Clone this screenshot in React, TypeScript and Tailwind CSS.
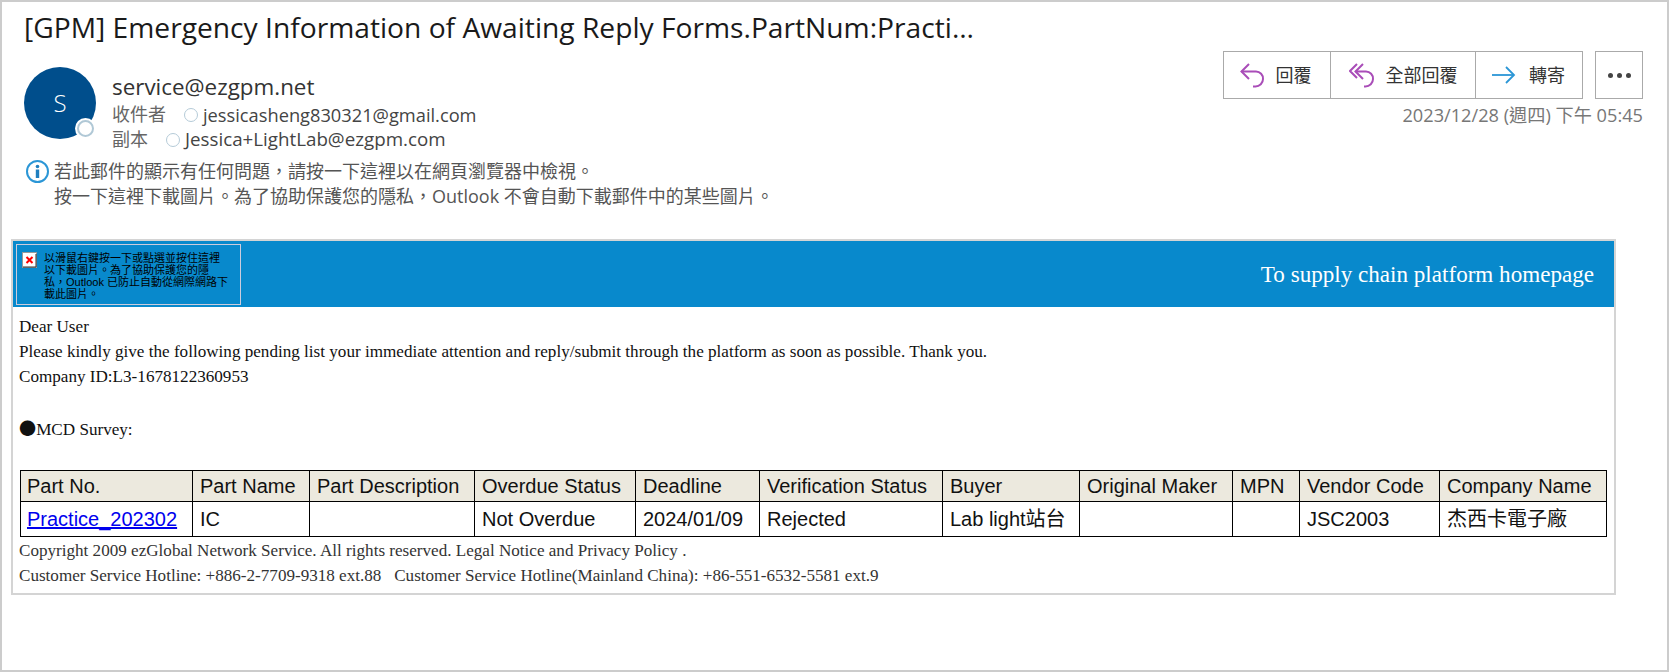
const serif = "font-['Liberation_Serif','Noto_Sans_CJK_TC',serif]";

const columns = [
  { title: "Part No.", width: "w-[172px]", pad: "pl-[6px]" },
  { title: "Part Name", width: "w-[117px]", pad: "pl-[7px]" },
  { title: "Part Description", width: "w-[165px]", pad: "pl-[7px]" },
  { title: "Overdue Status", width: "w-[161px]", pad: "pl-[7px]" },
  { title: "Deadline", width: "w-[124px]", pad: "pl-[7px]" },
  { title: "Verification Status", width: "w-[183px]", pad: "pl-[7px]" },
  { title: "Buyer", width: "w-[137px]", pad: "pl-[7px]" },
  { title: "Original Maker", width: "w-[153px]", pad: "pl-[7px]" },
  { title: "MPN", width: "w-[67px]", pad: "pl-[7px]" },
  { title: "Vendor Code", width: "w-[140px]", pad: "pl-[7px]" },
  { title: "Company Name", width: "w-[167px]", pad: "pl-[7px]" },
];

const row = ["IC", "", "Not Overdue", "2024/01/09", "Rejected", "Lab light站台", "", "", "JSC2003", "杰西卡電子廠"];

function ReplyIcon() {
  return (
    <svg width="25" height="25" viewBox="0 0 25 25" fill="none" stroke="#a94db8" strokeWidth="2">
      <path d="M9 1 1.5 8.5 9 16" />
      <path d="M1.5 8.5H16a7 7 0 0 1 7 7.5 7.5 7.5 0 0 1-7.5 7.5H13" />
    </svg>
  );
}

function ReplyAllIcon() {
  return (
    <svg width="26" height="25" viewBox="0 0 26 25" fill="none" stroke="#a94db8" strokeWidth="2">
      <path d="M8 1 1 8l7 7" />
      <path d="M14 1 6.5 8.5 14 16" />
      <path d="M6.5 8.5H17a7 7 0 0 1 7 7.5 7.5 7.5 0 0 1-7.5 7.5H15" />
    </svg>
  );
}

function ForwardIcon() {
  return (
    <svg width="24" height="20" viewBox="0 0 24 20" fill="none" stroke="#2b96d6" strokeWidth="1.8">
      <path d="M0 10h22" />
      <path d="m14 2 8 8-8 8" />
    </svg>
  );
}

function BrokenImageIcon() {
  return (
    <svg className="shrink-0" width="15" height="16" viewBox="0 0 15 16">
      <rect x="0.5" y="0.5" width="14" height="15" fill="#fff" stroke="#999" />
      <path d="M1 15h13V2" fill="none" stroke="#333" />
      <path d="m4.5 5 6 6m0-6-6 6" stroke="#f00" strokeWidth="2" />
    </svg>
  );
}

function ActionButton({ icon, label, className }: { icon: React.ReactNode; label: string; className: string }) {
  return (
    <button className={`flex h-full items-center justify-center gap-[11px] ${className}`}>
      {icon}
      <span className="text-[18px] text-[#333]">{label}</span>
    </button>
  );
}

function Recipient({ label, email, gap, size }: { label: string; email: string; gap: string; size: string }) {
  return (
    <div className="flex h-[25px] items-center">
      <span className={`text-[18px] text-[#666] ${gap}`}>{label}</span>
      <span className="mr-[5px] h-[14px] w-[14px] rounded-full border border-[#b5cbd8]" />
      <span className={`text-[#444] ${size}`}>{email}</span>
    </div>
  );
}

export default function App() {
  return (
    <div className="h-[672px] w-[1669px] overflow-hidden border-2 border-[#ccc] bg-white font-['Open_Sans','Noto_Sans_CJK_TC',sans-serif]">
      <header className="flex justify-between">
        <div>
          <h1 className="ml-[22px] mt-[5px] h-[40px] text-[28.2px] leading-[40px] text-[#1a1a1a]">
            [GPM] Emergency Information of Awaiting Reply Forms.PartNum:Practi…
          </h1>
          <div className="ml-[22px] mt-[20px] flex">
            <div className="relative flex h-[72px] w-[72px] items-center justify-center rounded-full bg-[#004e8c] text-[24px] font-light text-white">
              S
              <span className="absolute bottom-0 right-0 flex h-[21px] w-[21px] items-center justify-center rounded-full bg-white">
                <span className="h-[17px] w-[17px] rounded-full border-2 border-[#b0c8d6]" />
              </span>
            </div>
            <div className="ml-[16px] pt-[5px]">
              <div className="h-[30px] text-[22.4px] leading-[30px] text-[#333]">service@ezgpm.net</div>
              <Recipient label="收件者" email="jessicasheng830321@gmail.com" gap="mr-[18px]" size="text-[18.25px]" />
              <Recipient label="副本" email="Jessica+LightLab@ezgpm.com" gap="mr-[18px]" size="text-[18.75px]" />
            </div>
          </div>
          <div className="ml-[23px] mt-[7px] flex gap-[4px] text-[18px] leading-[25px] text-[#555]">
            <svg width="25" height="25" viewBox="0 0 25 25">
              <circle cx="12.5" cy="12.5" r="10.5" fill="none" stroke="#2b96d6" strokeWidth="2" />
              <circle cx="12.5" cy="7.5" r="1.8" fill="#1f7fbf" />
              <rect x="10.8" y="10.5" width="3.4" height="8.5" fill="#1f7fbf" />
            </svg>
            <div>
              <div>若此郵件的顯示有任何問題，請按一下這裡以在網頁瀏覽器中檢視。</div>
              <div>按一下這裡下載圖片。為了協助保護您的隱私，Outlook 不會自動下載郵件中的某些圖片。</div>
            </div>
          </div>
        </div>
        <div className="mr-[24px] flex flex-col items-end pt-[49px]">
          <div className="flex h-[48px] gap-[12px]">
            <div className="flex h-full border border-[#aaa]">
              <ActionButton icon={<ReplyIcon />} label="回覆" className="w-[107px] border-r border-[#aaa] pr-[3px]" />
              <ActionButton icon={<ReplyAllIcon />} label="全部回覆" className="w-[145px] border-r border-[#aaa]" />
              <ActionButton icon={<ForwardIcon />} label="轉寄" className="w-[106px] gap-[13px] pr-[1px]" />
            </div>
            <button className="flex h-full w-[48px] items-center justify-center gap-[4px] border border-[#aaa]">
              <span className="h-[5px] w-[5px] rounded-full bg-[#444]" />
              <span className="h-[5px] w-[5px] rounded-full bg-[#444]" />
              <span className="h-[5px] w-[5px] rounded-full bg-[#444]" />
            </button>
          </div>
          <div className="mt-[4px] text-[18.2px] leading-[24px] text-[#777]">2023/12/28 (週四) 下午 05:45</div>
        </div>
      </header>

      <main className={`ml-[9px] mt-[30px] h-[356px] w-[1605px] border-2 border-[#d4d4d4] ${serif}`}>
        <div className="flex h-[66px] items-center justify-between bg-[#0889cc] py-[2px] pl-[3px] pr-[20px]">
          <div className="flex h-[61px] w-[225px] gap-[7px] border border-[#ccd] pl-[5px] pt-[7px] font-['Liberation_Sans','Noto_Sans_CJK_TC',sans-serif] text-[11px] leading-[12px] text-black">
            <BrokenImageIcon />
            <div className="whitespace-nowrap">
              <div>以滑鼠右鍵按一下或點選並按住這裡</div>
              <div>以下載圖片。為了協助保護您的隱</div>
              <div>私，Outlook 已防止自動從網際網路下</div>
              <div>載此圖片。</div>
            </div>
          </div>
          <a className="text-[23.1px] text-white">To supply chain platform homepage</a>
        </div>

        <div className="pl-[6px] pt-[7px] text-[17.13px] leading-[25px] text-[#111]">
          <p>Dear User</p>
          <p>Please kindly give the following pending list your immediate attention and reply/submit through the platform as soon as possible. Thank you.</p>
          <p>Company ID:L3-1678122360953</p>
          <p className="mt-[26px]">
            <span className="font-['Noto_Sans_CJK_TC']">●</span>MCD Survey:
          </p>
        </div>

        <table className="ml-[7px] mt-[28px] w-[1587px] table-fixed border-collapse border border-black font-['Liberation_Sans','Noto_Sans_CJK_TC',sans-serif] text-[20px] text-[#111]">
          <thead>
            <tr className="h-[30px] bg-[#ece9de]">
              {columns.map((c) => (
                <th key={c.title} className={`border border-black text-left font-normal ${c.width} ${c.pad}`}>
                  {c.title}
                </th>
              ))}
            </tr>
          </thead>
          <tbody>
            <tr className="h-[35px]">
              <td className="border border-black pl-[6px]">
                <a className="text-[#00e] underline">Practice_202302</a>
              </td>
              {row.map((cell, i) => (
                <td key={i} className="border border-black pl-[7px]">
                  {cell}
                </td>
              ))}
            </tr>
          </tbody>
        </table>

        <div className="pl-[6px] pt-[1px] text-[17.1px] leading-[25px] text-[#333]">
          <p>Copyright 2009 ezGlobal Network Service. All rights reserved. Legal Notice and Privacy Policy .</p>
          <p className="whitespace-pre">Customer Service Hotline: +886-2-7709-9318 ext.88   Customer Service Hotline(Mainland China): +86-551-6532-5581 ext.9</p>
        </div>
      </main>
    </div>
  );
}
